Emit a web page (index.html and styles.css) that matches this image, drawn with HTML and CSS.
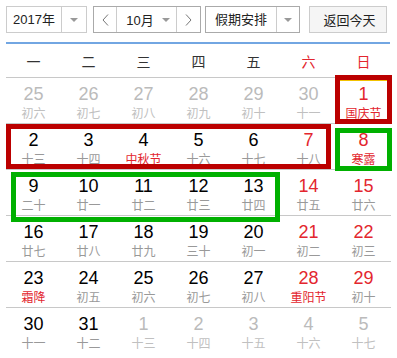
FILE: index.html
```html
<!DOCTYPE html>
<html lang="zh">
<head>
<meta charset="utf-8">
<link rel="stylesheet" href="styles.css">
</head>
<body>
<div class="cal">
  <div class="toolbar">
    <div class="box year">
      <div class="txt">2017年</div>
      <div class="drop"><span class="tri"></span></div>
    </div>
    <div class="box month">
      <div class="nav"><svg width="7" height="12" viewBox="0 0 7 12"><polyline points="6,0.5 1,6 6,11.5" fill="none" stroke="#777" stroke-width="1"/></svg></div>
      <div class="mid"><span>10月</span><span class="tri"></span></div>
      <div class="nav next"><svg width="7" height="12" viewBox="0 0 7 12"><polyline points="1,0.5 6,6 1,11.5" fill="none" stroke="#777" stroke-width="1"/></svg></div>
    </div>
    <div class="box holiday">
      <div class="txt">假期安排</div>
      <div class="drop"><span class="tri"></span></div>
    </div>
    <div class="today">返回今天</div>
  </div>
  <div class="rule"></div>
  <div class="weekdays">
    <div>一</div><div>二</div><div>三</div><div>四</div><div>五</div><div class="we">六</div><div class="we">日</div>
  </div>
  <div class="grid">
    <div class="row">
      <div class="day other"><b>25</b><i>初六</i></div>
      <div class="day other"><b>26</b><i>初七</i></div>
      <div class="day other"><b>27</b><i>初八</i></div>
      <div class="day other"><b>28</b><i>初九</i></div>
      <div class="day other"><b>29</b><i>初十</i></div>
      <div class="day other"><b>30</b><i>十一</i></div>
      <div class="day we fest sel"><b>1</b><i>国庆节</i></div>
    </div>
    <div class="row">
      <div class="day"><b>2</b><i>十三</i></div>
      <div class="day"><b>3</b><i>十四</i></div>
      <div class="day fest"><b>4</b><i>中秋节</i></div>
      <div class="day"><b>5</b><i>十六</i></div>
      <div class="day"><b>6</b><i>十七</i></div>
      <div class="day we"><b>7</b><i>十八</i></div>
      <div class="day we fest"><b>8</b><i>寒露</i></div>
    </div>
    <div class="row">
      <div class="day"><b>9</b><i>二十</i></div>
      <div class="day"><b>10</b><i>廿一</i></div>
      <div class="day"><b>11</b><i>廿二</i></div>
      <div class="day"><b>12</b><i>廿三</i></div>
      <div class="day"><b>13</b><i>廿四</i></div>
      <div class="day we"><b>14</b><i>廿五</i></div>
      <div class="day we"><b>15</b><i>廿六</i></div>
    </div>
    <div class="row">
      <div class="day"><b>16</b><i>廿七</i></div>
      <div class="day"><b>17</b><i>廿八</i></div>
      <div class="day"><b>18</b><i>廿九</i></div>
      <div class="day"><b>19</b><i>三十</i></div>
      <div class="day"><b>20</b><i>初一</i></div>
      <div class="day we"><b>21</b><i>初二</i></div>
      <div class="day we"><b>22</b><i>初三</i></div>
    </div>
    <div class="row">
      <div class="day fest"><b>23</b><i>霜降</i></div>
      <div class="day"><b>24</b><i>初五</i></div>
      <div class="day"><b>25</b><i>初六</i></div>
      <div class="day"><b>26</b><i>初七</i></div>
      <div class="day"><b>27</b><i>初八</i></div>
      <div class="day we fest"><b>28</b><i>重阳节</i></div>
      <div class="day we"><b>29</b><i>初十</i></div>
    </div>
    <div class="row last">
      <div class="day"><b>30</b><i>十一</i></div>
      <div class="day"><b>31</b><i>十二</i></div>
      <div class="day other"><b>1</b><i>十三</i></div>
      <div class="day other"><b>2</b><i>十四</i></div>
      <div class="day other"><b>3</b><i>十五</i></div>
      <div class="day other"><b>4</b><i>十六</i></div>
      <div class="day other"><b>5</b><i>十七</i></div>
    </div>
  </div>
  <div class="mark red mark-a"></div>
  <div class="mark red mark-b"></div>
  <div class="mark green mark-c"></div>
  <div class="mark green mark-d"></div>
</div>
</body>
</html>
```

FILE: styles.css
```css
* { box-sizing: border-box; }
body {
  margin: 0;
  background: #fff;
  font-family: "Liberation Sans", "Noto Sans CJK SC", sans-serif;
  color: #000;
}
.cal {
  position: relative;
  margin-left: 6px;
  width: 385px;
  padding-top: 6px;
}
.toolbar {
  display: flex;
  height: 27px;
  font-size: 13px;
  color: #222;
}
.box {
  display: flex;
  height: 27px;
  border: 1px solid #bbb;
  background: #fff;
}
.year { width: 81px; border-color: #ccc; }
.year .txt { width: 54px; }
.year .drop { width: 24px; }
.month { width: 108px; margin-left: 6px; border-color: #aaa; }
.holiday { width: 95px; margin-left: 4px; border-color: #aaa; }
.holiday .txt { width: 70px; }
.holiday .drop { width: 22px; }
.txt {
  display: flex;
  align-items: center;
  justify-content: center;
  line-height: 25px;
}
.drop {
  display: flex;
  align-items: center;
  justify-content: center;
  border-left: 1px solid #ccc;
}
.tri {
  display: inline-block;
  width: 0;
  height: 0;
  border-left: 4px solid transparent;
  border-right: 4px solid transparent;
  border-top: 4px solid #999;
}
.nav {
  display: flex;
  align-items: center;
  justify-content: center;
  width: 22px;
}
.nav.next { width: 24px; border-left: 1px solid #ccc; }
.mid {
  display: flex;
  align-items: center;
  justify-content: center;
  gap: 8px;
  width: 60px;
  border-left: 1px solid #ccc;
  padding-left: 3px;
}
.today {
  width: 78px;
  height: 27px;
  margin-left: 9px;
  border: 1px solid #ccc;
  background: #f5f5f5;
  display: flex;
  align-items: center;
  justify-content: center;
  padding-left: 3px;
}
.rule {
  height: 2px;
  margin-top: 9px;
  width: 384px;
  background: #72a6e2;
}
.weekdays {
  display: grid;
  grid-template-columns: repeat(7, 55px);
  height: 34px;
  border-bottom: 1px solid #c8c8c8;
  width: 384px;
  font-family: "Noto Sans CJK SC", sans-serif;
  font-size: 14px;
  color: #333;
}
.weekdays div {
  display: flex;
  align-items: center;
  justify-content: center;
}
.weekdays .we { color: #e3262e; }
.grid { width: 385px; }
.row {
  display: grid;
  grid-template-columns: repeat(7, 55px);
  height: 46px;
  border-bottom: 1px solid #c8c8c8;
}
.row.last { border-bottom: none; }
.day {
  display: flex;
  flex-direction: column;
  align-items: center;
  padding-top: 6px;
}
.day b {
  font-weight: normal;
  font-size: 18px;
  line-height: 20px;
  color: #000;
}
.day i {
  font-style: normal;
  font-family: "Noto Sans CJK SC", sans-serif;
  font-size: 12px;
  line-height: 16px;
  margin-top: 1px;
  color: #999;
}
.day.we b { color: #e3262e; }
.day.fest i { color: #e3262e; }
.day.other b { color: #bbb; }
.day.other i { color: #c0c0c0; }
.day.sel { box-shadow: inset 0 2px 0 #fff, inset 0 3px 0 #f2c200; }
.mark {
  position: absolute;
  border: 5px solid;
}
.red { border-color: #bb0000; }
.green { border-color: #00b000; }
.mark-a { left: 329px; top: 75px; width: 57px; height: 49px; }
.mark-b { left: 0; top: 124px; width: 325px; height: 45px; }
.mark-c { left: 329px; top: 128px; width: 57px; height: 43px; }
.mark-d { left: 5px; top: 172px; width: 269px; height: 50px; }
```
